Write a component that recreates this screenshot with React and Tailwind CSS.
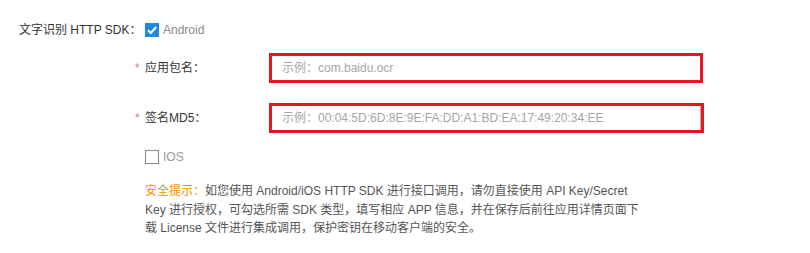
function CheckBox({ checked }) {
    if (checked) {
        return (
            <span className="flex h-[14px] w-[14px] items-center justify-center bg-[#1e88e5]">
                <svg width="12" height="12" viewBox="0 0 12 12" fill="none">
                    <path d="M2 6.2 L4.8 9 L10.2 3" stroke="#fff" strokeWidth="2" />
                </svg>
            </span>
        );
    }
    return <span className="h-[14px] w-[14px] border border-[#8a8a8a] bg-white"></span>;
}

function Field({ label, placeholder, wide }) {
    return (
        <div className="flex items-center">
            <span className="w-[10px] text-[#f26d7d]">*</span>
            <span className="w-[124px] text-[#333]">{label}</span>
            <div
                className={`flex h-[30px] items-center border-[3px] border-[#e8141e] bg-white pl-[10px] ${wide ? "w-[435px]" : "w-[434px]"}`}
            >
                <span className="flex-1 text-[#a6a6a6]">{placeholder}</span>
                {wide && <span className="h-full w-[1px] bg-[#b5b5b5]"></span>}
            </div>
        </div>
    );
}

export default function App() {
    return (
        <div
            className="h-[253px] w-[810px] bg-white pl-[19px] pt-[20px] text-[12px] leading-[20px]"
            style={{ fontFamily: '"Liberation Sans", "Noto Sans CJK SC", sans-serif' }}
        >
            <div className="flex items-center">
                <span className="w-[126px] text-[#333]">文字识别 HTTP SDK：</span>
                <CheckBox checked />
                <span className="ml-[4px] text-[#888]">Android</span>
            </div>

            <div className="ml-[116px]">
                <div className="mt-[13px]">
                    <Field label="应用包名：" placeholder="示例：com.baidu.ocr" />
                </div>
                <div className="mt-[20px]">
                    <Field label="签名MD5：" placeholder="示例：00:04:5D:6D:8E:9E:FA:DD:A1:BD:EA:17:49:20:34:EE" wide />
                </div>

                <div className="ml-[10px] mt-[14px] flex items-center">
                    <CheckBox />
                    <span className="ml-[4px] text-[#999]">IOS</span>
                </div>

                <p className="ml-[10px] mt-[15px] w-[500px] text-[#555] leading-[18.5px]">
                    <span className="text-[#f39200]">安全提示：</span>
                    如您使用 Android/iOS HTTP SDK 进行接口调用，请勿直接使用 API Key/Secret Key 进行授权，可勾选所需 SDK 类型，填写相应 APP 信息，并在保存后前往应用详情页面下载 License 文件进行集成调用，保护密钥在移动客户端的安全。
                </p>
            </div>
        </div>
    );
}
